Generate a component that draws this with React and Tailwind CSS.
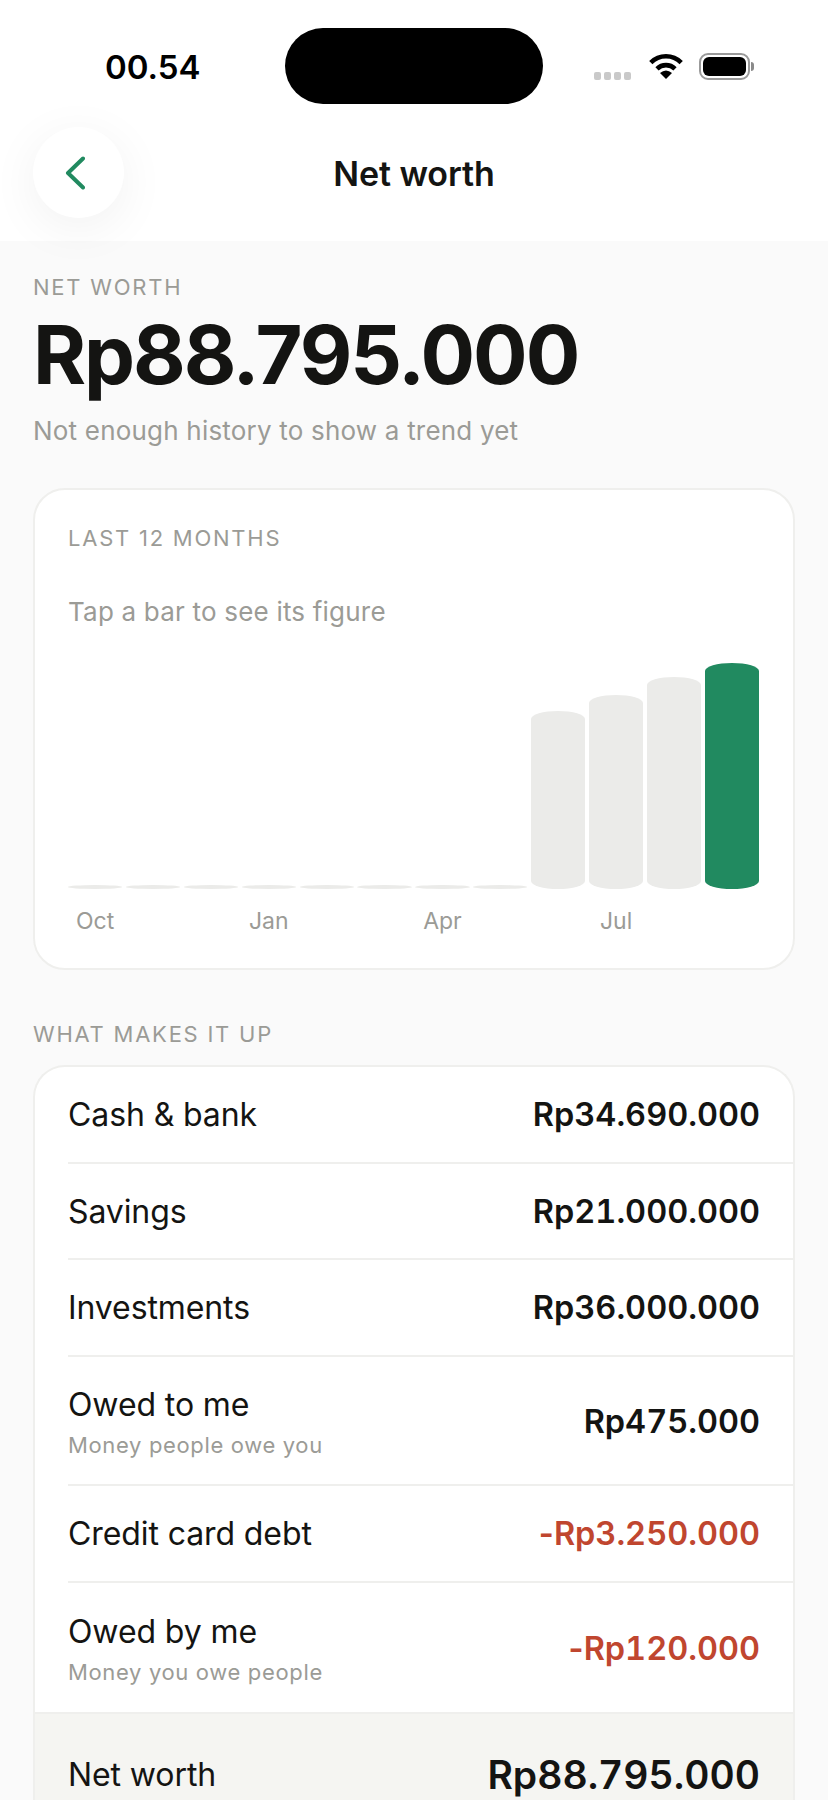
const bars = [
  { label: "Oct", h: "h-[4px] rounded-[50%]", tone: "bg-[#ebebe9]" },
  { label: "", h: "h-[4px] rounded-[50%]", tone: "bg-[#ebebe9]" },
  { label: "", h: "h-[4px] rounded-[50%]", tone: "bg-[#ebebe9]" },
  { label: "Jan", h: "h-[4px] rounded-[50%]", tone: "bg-[#ebebe9]" },
  { label: "", h: "h-[4px] rounded-[50%]", tone: "bg-[#ebebe9]" },
  { label: "", h: "h-[4px] rounded-[50%]", tone: "bg-[#ebebe9]" },
  { label: "Apr", h: "h-[4px] rounded-[50%]", tone: "bg-[#ebebe9]" },
  { label: "", h: "h-[4px] rounded-[50%]", tone: "bg-[#ebebe9]" },
  { label: "", h: "h-[178px] rounded-[27px/8px]", tone: "bg-[#ebebe9]" },
  { label: "Jul", h: "h-[194px] rounded-[27px/8px]", tone: "bg-[#ebebe9]" },
  { label: "", h: "h-[212px] rounded-[27px/8px]", tone: "bg-[#ebebe9]" },
  { label: "", h: "h-[226px] rounded-[27px/8px]", tone: "bg-[#218a60]" },
];

const rows = [
  { name: "Cash & bank", value: "Rp34.690.000" },
  { name: "Savings", value: "Rp21.000.000" },
  { name: "Investments", value: "Rp36.000.000" },
  { name: "Owed to me", sub: "Money people owe you", value: "Rp475.000" },
  { name: "Credit card debt", value: "Rp3.250.000", red: true },
  { name: "Owed by me", sub: "Money you owe people", value: "Rp120.000", red: true },
];

const StatusBar = () => (
  <div className="relative flex h-[127px] bg-white pt-[28px]">
    <div className="w-[285px] pl-[105px] pt-[19px] text-[33px] leading-[40px] font-semibold text-black">00.54</div>
    <div className="h-[76px] w-[258px] rounded-[38px] bg-black" />
    <div className="flex items-start pl-[51px] pt-[25px]">
      <div className="mt-[19px] flex gap-[3px]">
        <span className="h-[8px] w-[7px] rounded-[2px] bg-[#c9c9c9]" />
        <span className="h-[8px] w-[7px] rounded-[2px] bg-[#c9c9c9]" />
        <span className="h-[8px] w-[7px] rounded-[2px] bg-[#c9c9c9]" />
        <span className="h-[8px] w-[7px] rounded-[2px] bg-[#c9c9c9]" />
      </div>
      <svg className="ml-[18px]" width="34" height="26" viewBox="0 0 34 26">
        <path d="M1.8 9.6A21.5 21.5 0 0 1 32.2 9.6" fill="none" stroke="#000" strokeWidth="4.6" />
        <path d="M8 15.8A12.8 12.8 0 0 1 26 15.8" fill="none" stroke="#000" strokeWidth="4.6" />
        <path d="M17 26L11 20Q17 15 23 20Z" fill="#000" />
      </svg>
      <div className="ml-[16px] flex items-center">
        <div className="flex h-[27px] w-[51px] items-center justify-center rounded-[9px] border-2 border-[#9a9a9a]">
          <div className="h-[19px] w-[43px] rounded-[6px] bg-black" />
        </div>
        <div className="ml-[1px] h-[9px] w-[3px] rounded-r-[3px] bg-[#8a8a8a]" />
      </div>
    </div>
  </div>
);

const Header = () => (
  <div className="grid h-[114px] grid-cols-[91px_1fr_91px] bg-white px-[33px]">
    <button className="relative flex h-[91px] w-[91px] items-center justify-center rounded-full bg-white shadow-[0_10px_50px_rgba(0,0,0,0.06)]">
      <svg className="mr-[9px]" width="22" height="34" viewBox="0 0 22 34">
        <path d="M20 2.5L5 17L20 31.5" fill="none" stroke="#218a60" strokeWidth="4" strokeLinecap="round" strokeLinejoin="round" />
      </svg>
    </button>
    <div className="text-center text-[34px] leading-[93px] font-semibold tracking-[-0.1px] text-[#141412]">Net worth</div>
    <div />
  </div>
);

const App = () => {
  return (
    <div className="h-[1800px] w-[828px] overflow-hidden bg-[#fafafa] font-['Inter',sans-serif]">
      <StatusBar />
      <Header />

      <div className="px-[33px] pt-[33px]">
        <div className="text-[22px] leading-[26px] tracking-[1.76px] text-[#9b9b96]">NET WORTH</div>
        <div className="mt-[6px] text-[81px] leading-[98px] font-bold tracking-[-2.1px] text-[#141412]">Rp88.795.000</div>
        <div className="mt-[10px] text-[26px] leading-[34px] tracking-[0.2px] text-[#9b9b96]">Not enough history to show a trend yet</div>

        <div className="mt-[40px] h-[482px] rounded-[32px] border-2 border-[#efefed] bg-white pt-[35px] pr-[34px] pl-[33px]">
          <div className="text-[22px] leading-[26px] tracking-[1.76px] text-[#9b9b96]">LAST 12 MONTHS</div>
          <div className="mt-[44px] text-[26px] leading-[34px] tracking-[0.2px] text-[#9b9b96]">Tap a bar to see its figure</div>

          <div className="mt-[34px] grid h-[226px] grid-cols-12 items-end gap-x-[3.6px]">
            {bars.map((bar, i) => (
              <div key={i} className={`${bar.h} ${bar.tone}`} />
            ))}
          </div>
          <div className="mt-[18px] grid grid-cols-12 gap-x-[3.6px]">
            {bars.map((bar, i) => (
              <div key={i} className="text-center text-[23px] leading-[28px] text-[#9b9b96]">{bar.label}</div>
            ))}
          </div>
        </div>

        <div className="mt-[51px] text-[22px] leading-[26px] tracking-[1.76px] text-[#9b9b96]">WHAT MAKES IT UP</div>

        <div className="mt-[18px] overflow-hidden rounded-t-[32px] border-x-2 border-t-2 border-[#efefed] bg-white">
          {rows.map((row, i) => (
            <div key={row.name} className={`ml-[33px] flex items-center justify-between pr-[33px] ${row.sub ? "h-[129.5px] pt-[4px]" : "h-[96.5px] pt-[2px]"} ${i < rows.length - 1 ? "border-b-2 border-[#efefed]" : ""}`}>
              <div>
                <div className="text-[32px] leading-[40px] tracking-[-0.1px] text-[#141412]">{row.name}</div>
                {row.sub && <div className="mt-[6px] text-[22px] leading-[28px] tracking-[0.65px] text-[#9b9b96]">{row.sub}</div>}
              </div>
              <div className={`text-[32.5px] leading-[40px] font-semibold tabular-nums ${row.red ? "text-[#c0462f]" : "text-[#141412]"}`}>
                {row.red && <span className="tracking-[-3px]">-</span>}
                {row.value}
              </div>
            </div>
          ))}
          <div className="flex h-[124px] items-center justify-between border-t-2 border-[#efefed] bg-[#f5f5f2] pr-[33px] pl-[33px]">
            <div className="text-[32px] leading-[40px] tracking-[-0.1px] text-[#141412]">Net worth</div>
            <div className="text-[39px] leading-[46px] font-semibold tabular-nums text-[#141412]">Rp88.795.000</div>
          </div>
        </div>
      </div>
    </div>
  );
};

export default App;
